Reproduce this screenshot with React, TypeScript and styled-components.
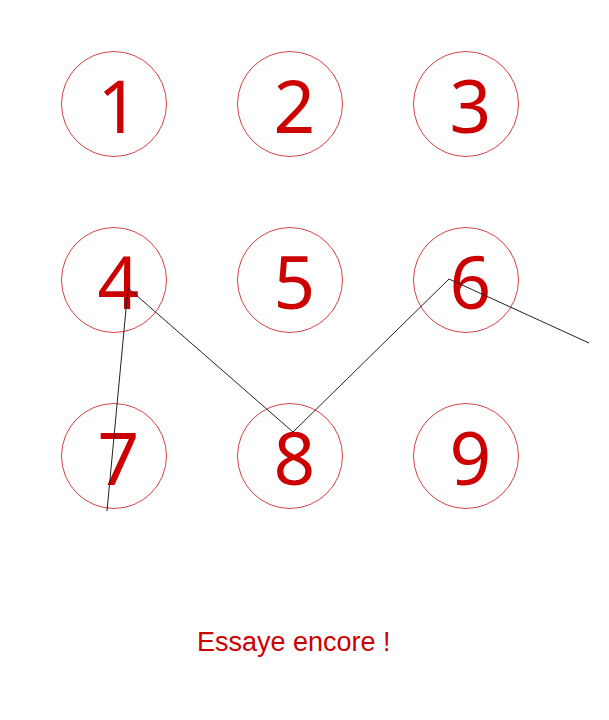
import React from "react";
import styled, { createGlobalStyle } from "styled-components";

const Global = createGlobalStyle`
  html, body { margin: 0; padding: 0; background: #fff; }
  body { width: 609px; height: 720px; overflow: hidden; }
`;

const Page = styled.div`
  position: relative;
  width: 609px;
  height: 720px;
  display: flex;
  flex-direction: column;
`;

const Grid = styled.div`
  display: grid;
  grid-template-columns: repeat(3, 106px);
  column-gap: 70px;
  row-gap: 70px;
  padding: 51px 0 0 61px;
`;

const Dot = styled.div`
  box-sizing: border-box;
  width: 106px;
  height: 106px;
  border: 1px solid rgba(204, 0, 0, 0.75);
  border-radius: 50%;
  display: flex;
  align-items: center;
  justify-content: center;
  padding-left: 9px;
  font-family: "Noto Sans", "Open Sans", sans-serif;
  font-size: 73px;
  line-height: 1;
  color: #cc0000;
`;

const Message = styled.div`
  margin-top: 118px;
  padding-left: 197px;
  font-family: "Liberation Sans", Arial, sans-serif;
  font-size: 27px;
  color: #cc0000;
`;

const Trace = styled.svg`
  position: absolute;
  left: 0;
  top: 0;
  pointer-events: none;
`;

export default function App() {
  const nums = [1, 2, 3, 4, 5, 6, 7, 8, 9];
  return (
    <Page>
      <Global />
      <Grid>
        {nums.map((n) => (
          <Dot key={n}>{n}</Dot>
        ))}
      </Grid>
      <Message>Essaye encore !</Message>
      <Trace width="609" height="720" viewBox="0 0 609 720">
        <polyline
          points="107,511 128,288 293,432 449,279 589,343"
          fill="none"
          stroke="#222"
          strokeWidth="1"
        />
      </Trace>
    </Page>
  );
}
